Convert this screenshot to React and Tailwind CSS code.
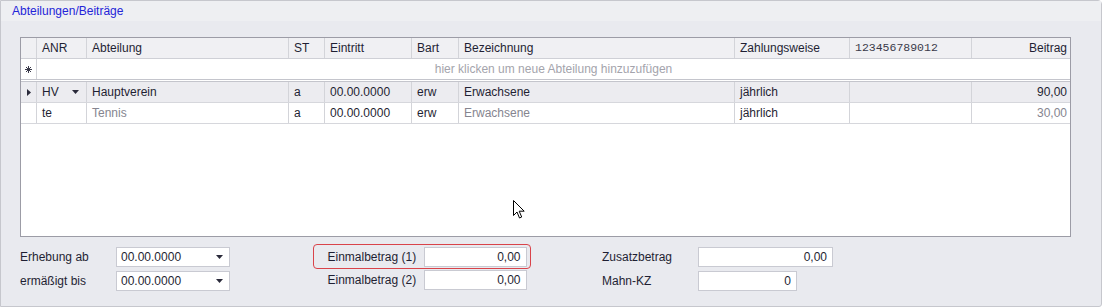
const cols = [
  { w: 16 },
  { w: 50, label: "ANR" },
  { w: 202, label: "Abteilung" },
  { w: 36, label: "ST" },
  { w: 87, label: "Eintritt" },
  { w: 47, label: "Bart" },
  { w: 276, label: "Bezeichnung" },
  { w: 115, label: "Zahlungsweise" },
  { w: 122, label: "123456789012", mono: true },
  { w: 100, label: "Beitrag", right: true },
];

const gridCols = "grid grid-cols-[16px_50px_202px_36px_87px_47px_276px_115px_122px_100px]";

const rows = [
  { anr: "HV", name: "Hauptverein", st: "a", date: "00.00.0000", bart: "erw", bez: "Erwachsene", zw: "jährlich", betrag: "90,00", current: true },
  { anr: "te", name: "Tennis", st: "a", date: "00.00.0000", bart: "erw", bez: "Erwachsene", zw: "jährlich", betrag: "30,00" },
];

function Arrow({ className = "" }) {
  return (
    <svg width="7" height="4" viewBox="0 0 7 4" className={className}>
      <path d="M0 0h7L3.5 4z" fill="#2a2a3a" />
    </svg>
  );
}

function DateInput({ value }) {
  return (
    <div className="flex h-[20px] w-[114px] items-center justify-between border border-[#c9cad2] bg-white pl-[4px] pr-[6px]">
      <span>{value}</span>
      <Arrow />
    </div>
  );
}

function NumInput({ value, w }) {
  return (
    <div className={`flex h-[20px] items-center justify-end border border-[#c9cad2] bg-white pr-[5px] ${w}`}>
      {value}
    </div>
  );
}

export default function App() {
  return (
    <div
      className="relative h-[308px] w-[1102px] overflow-hidden text-[12px] text-[#1f1f33]"
      style={{ fontFamily: '"Liberation Sans", Arial, sans-serif' }}
    >
      <div className="flex h-[307px] w-[1102px] flex-col rounded-tr-[4px] rounded-br-[3px] border border-[#c6c7cd] bg-[#e9eaef]">
        <div className="flex h-[20px] shrink-0 items-center bg-[#eeeff2] pl-[11px] text-[#2424d8]">
          Abteilungen/Beiträge
        </div>

        <div className="pl-[19px] pt-[16px]">
          <div className="h-[200px] w-[1051px] border border-[#9c9ca6] bg-white">
            <div className={`${gridCols} h-[21px] border-b border-[#cfd0d6] bg-[#f0f0f3]`}>
              {cols.map((c, i) => (
                <div
                  key={i}
                  className={`flex items-center border-r border-[#d3d4d9] px-[5px] last:border-r-0 ${c.right ? "justify-end" : ""}`}
                >
                  {c.mono ? (
                    <span className="text-[11.5px] text-[#3a3a4a]" style={{ fontFamily: '"Liberation Mono", monospace' }}>
                      {c.label}
                    </span>
                  ) : (
                    c.label
                  )}
                </div>
              ))}
            </div>

            <div className="flex h-[23px] border-b-[3px] border-double border-[#c4c5cc]">
              <div className="flex w-[16px] items-center justify-center border-r border-[#d3d4d9]">
                {/* new-row marker */}
                <svg width="7" height="7" viewBox="0 0 7 7" stroke="#3a3a4a" strokeWidth="1">
                  <path d="M3.5 0v7M0 3.5h7M1 1l5 5M6 1L1 6" />
                </svg>
              </div>
              <div className="flex flex-1 items-center justify-center text-[#a4a4ac]">
                hier klicken um neue Abteilung hinzuzufügen
              </div>
            </div>

            {rows.map((r, i) => {
              const dim = r.current ? "" : "text-[#85858f]";
              return (
                <div
                  key={i}
                  className={`${gridCols} h-[21px] border-b border-[#d6d7dc] ${r.current ? "bg-[#ececf0]" : "bg-white"}`}
                >
                  <div className="flex items-center justify-center border-r border-[#d3d4d9]">
                    {r.current && (
                      <svg width="4" height="7" viewBox="0 0 4 7">
                        <path d="M0 0l4 3.5L0 7z" fill="#2a2a3a" />
                      </svg>
                    )}
                  </div>
                  <div className="flex items-center justify-between border-r border-[#d3d4d9] pl-[5px] pr-[7px]">
                    <span>{r.anr}</span>
                    {r.current && <Arrow />}
                  </div>
                  <div className={`flex items-center border-r border-[#d3d4d9] px-[5px] ${dim}`}>{r.name}</div>
                  <div className="flex items-center border-r border-[#d3d4d9] px-[5px]">{r.st}</div>
                  <div className="flex items-center border-r border-[#d3d4d9] px-[5px]">{r.date}</div>
                  <div className="flex items-center border-r border-[#d3d4d9] px-[5px]">{r.bart}</div>
                  <div className={`flex items-center border-r border-[#d3d4d9] px-[5px] ${dim}`}>{r.bez}</div>
                  <div className="flex items-center border-r border-[#d3d4d9] px-[5px]">{r.zw}</div>
                  <div className="border-r border-[#d3d4d9]" />
                  <div className={`flex items-center justify-end px-[5px] ${dim}`}>{r.betrag}</div>
                </div>
              );
            })}
          </div>
        </div>

        <div className="flex pl-[19px] pt-[7px]">
          <div className="flex flex-col gap-[4px] pt-[3px]">
            <div className="flex items-center">
              <span className="w-[96px]">Erhebung ab</span>
              <DateInput value="00.00.0000" />
            </div>
            <div className="flex items-center">
              <span className="w-[96px]">ermäßigt bis</span>
              <DateInput value="00.00.0000" />
            </div>
          </div>

          <div className="ml-[83px] flex flex-col">
            <div className="flex items-center rounded-[4px] border-[1.5px] border-[#d9434a] py-[1.5px] pl-[13.5px] pr-[3.5px]">
              <span className="w-[96px]">Einmalbetrag (1)</span>
              <NumInput value="0,00" w="w-[103px]" />
            </div>
            <div className="flex items-center border-[1.5px] border-transparent pl-[13.5px] pr-[3.5px]">
              <span className="w-[96px]">Einmalbetrag (2)</span>
              <NumInput value="0,00" w="w-[103px]" />
            </div>
          </div>

          <div className="ml-[71px] flex flex-col gap-[4px] pt-[3px]">
            <div className="flex items-center">
              <span className="w-[96px]">Zusatzbetrag</span>
              <NumInput value="0,00" w="w-[135px]" />
            </div>
            <div className="flex items-center">
              <span className="w-[96px]">Mahn-KZ</span>
              <NumInput value="0" w="w-[99px]" />
            </div>
          </div>
        </div>
      </div>

      <svg className="absolute left-[513px] top-[200px]" width="14" height="20" viewBox="0 0 14 20">
        <path d="M0.5 0.5v15l3.5-3.5 2.5 6 2.2-1-2.5-5.8h5z" fill="#fff" stroke="#000" strokeWidth="1" strokeLinejoin="miter" />
      </svg>
    </div>
  );
}
